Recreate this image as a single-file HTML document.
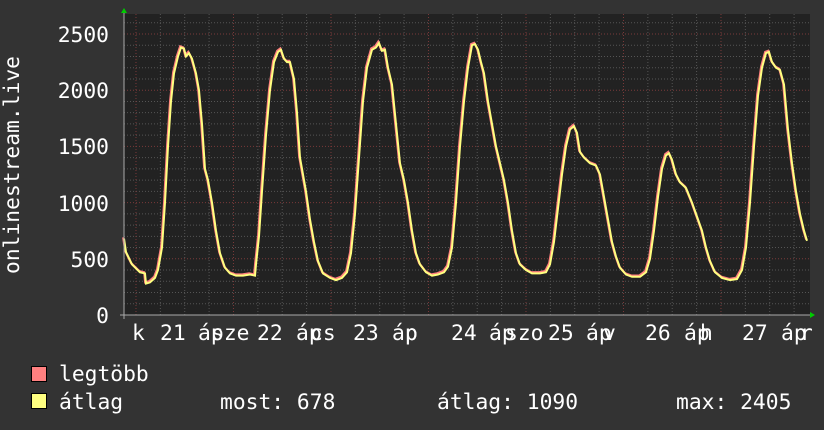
<!DOCTYPE html>
<html><head><meta charset="utf-8"><style>
html,body{margin:0;padding:0;background:#333;width:824px;height:430px;overflow:hidden}
svg text{font-family:"DejaVu Sans Mono","Liberation Mono",monospace;font-size:21.3px;fill:#fff}
</style></head><body>
<svg id="g" width="824" height="430" xmlns="http://www.w3.org/2000/svg">
<rect x="0" y="0" width="824" height="430" fill="#333"/>
<rect x="124" y="14" width="686" height="301" fill="#222"/>
<g id="grid"></g>
<polyline id="red" fill="none" stroke="#ff7f7f" stroke-width="2.2"/>
<polyline id="yel" fill="none" stroke="#ffff80" stroke-width="2"/>
<line x1="120" y1="315" x2="812" y2="315" stroke="#aaa" stroke-width="1"/>
<line x1="124" y1="12" x2="124" y2="319" stroke="#aaa" stroke-width="1"/>
<polygon points="121,13 127,13 124,8" fill="#0c0"/>
<polygon points="810,312 810,318 815,315" fill="#0c0"/>
<g text-anchor="end">
<text x="109" y="42">2500</text>
<text x="109" y="98">2000</text>
<text x="109" y="154">1500</text>
<text x="109" y="211">1000</text>
<text x="109" y="267">500</text>
<text x="109" y="323">0</text>
</g>
<text transform="translate(19,165) rotate(-90)" text-anchor="middle">onlinestream.live</text>
<g>
<text x="132" y="340">k</text><text x="160" y="340">21</text><text x="198" y="340">áp</text><text x="211" y="340">sze</text>
<text x="257" y="340">22</text><text x="296" y="340">áp</text><text x="310" y="340">cs</text>
<text x="353" y="340">23</text><text x="392" y="340">áp</text><text x="405" y="340">p</text>
<text x="451" y="340">24</text><text x="489" y="340">áp</text><text x="505" y="340">szo</text>
<text x="548" y="340">25</text><text x="586" y="340">áp</text><text x="603" y="340">v</text>
<text x="645" y="340">26</text><text x="684" y="340">áp</text><text x="700" y="340">h</text>
<text x="742" y="340">27</text><text x="781" y="340">áp</text><text x="800" y="340">r</text>
</g>
<rect x="31.5" y="366.5" width="15" height="15" fill="#ff8080" stroke="#000"/>
<rect x="31.5" y="393.5" width="15" height="15" fill="#ffff80" stroke="#000"/>
<text x="59" y="381">legtöbb</text>
<text x="59" y="409">átlag</text>
<text x="220" y="409">most: 678</text>
<text x="437" y="409">átlag: 1090</text>
<text x="676" y="409">max: 2405</text>
</svg>
<script>
var g=document.getElementById("grid"),h="";
function Y(v){return 315-v*0.1124;}
for(var v=100;v<=2600;v+=100){var y=Y(v);if(y<14)break;var maj=v%500==0;
h+='<line x1="124" x2="810" y1="'+y+'" y2="'+y+'" stroke="'+(maj?'#7a3a3a':'#555')+'" stroke-dasharray="1,2"/>';}
for(var x=136-24.4;x<810;x+=24.375){if(x<125)continue;var k=Math.round((x-136)/24.375);var maj=(k%4==0);
h+='<line y1="14" y2="315" x1="'+x+'" x2="'+x+'" stroke="'+(maj?'#7a3a3a':'#555')+'" stroke-dasharray="1,2"/>';}
g.innerHTML=h;
var p=[124,680,126,560,132,450,140,380,145,370,146,280,150,290,155,330,158,400,162,600,165,1000,168,1500,171,1900,174,2150,178,2300,181,2380,184,2370,186,2300,189,2330,192,2280,196,2150,199,2000,202,1700,205,1300,208,1200,212,1000,216,750,220,550,225,420,230,370,236,350,243,350,250,360,255,350,256,450,259,700,262,1100,266,1600,270,2000,274,2250,278,2340,281,2360,284,2280,287,2250,290,2250,294,2100,297,1800,300,1400,303,1250,306,1100,310,850,314,650,318,480,323,370,330,330,336,310,342,330,347,380,351,550,355,900,359,1400,363,1900,367,2200,372,2360,376,2380,379,2420,382,2350,385,2360,388,2200,392,2050,396,1700,400,1350,404,1200,408,1000,412,750,416,550,420,450,426,380,432,350,438,360,444,380,448,430,452,600,456,1000,460,1500,464,1900,468,2200,472,2400,475,2410,478,2360,481,2250,484,2150,488,1900,492,1700,496,1500,500,1350,504,1200,508,1000,512,750,516,550,520,450,526,400,532,370,540,370,546,380,550,450,554,650,558,950,562,1250,566,1500,570,1650,574,1680,577,1620,580,1450,584,1400,590,1350,596,1330,600,1250,604,1050,608,850,612,650,616,520,620,420,626,360,632,340,640,340,646,380,650,500,654,750,658,1050,662,1300,666,1420,669,1440,672,1380,676,1250,680,1180,686,1130,692,1000,698,850,702,750,706,600,710,480,715,380,722,330,730,310,737,320,742,400,746,600,750,1000,754,1500,758,1950,762,2200,766,2330,769,2340,772,2250,776,2200,780,2180,784,2050,788,1650,792,1350,796,1100,800,900,804,750,807,660];
var a="",b="";for(var i=0;i<p.length;i+=2){a+=(p[i]-0.8)+","+(Y(p[i+1])-1.2)+" ";b+=p[i]+","+Y(p[i+1])+" ";}
document.getElementById("red").setAttribute("points",a);
document.getElementById("yel").setAttribute("points",b);
</script>
</body></html>
